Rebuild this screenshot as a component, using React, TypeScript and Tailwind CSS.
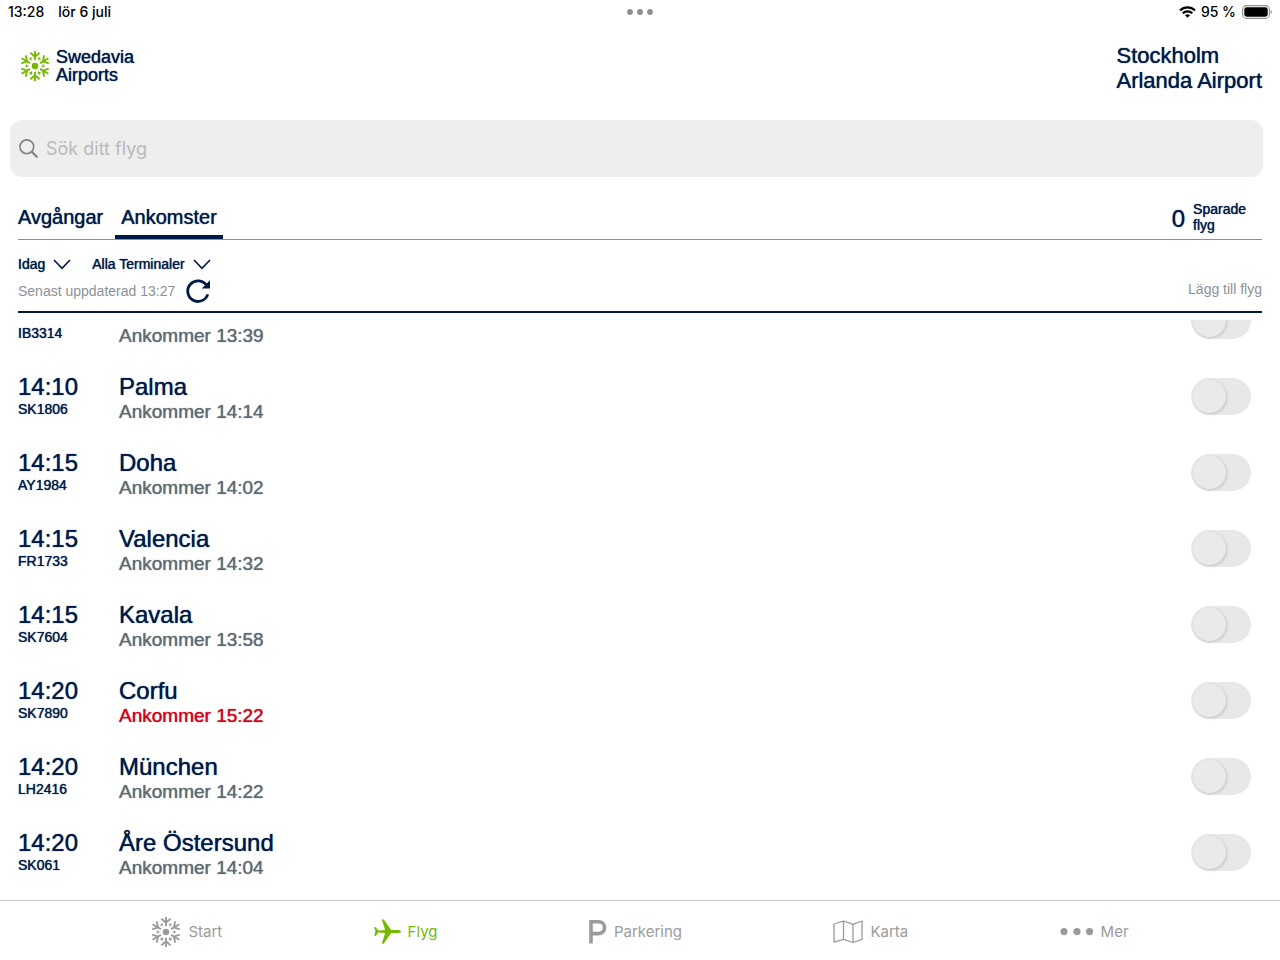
import React, { useState } from "react";

type Flight = {
  code: string;
  eta: string;
  time?: string;
  city?: string;
  delayed?: boolean;
};

const FLIGHTS: Flight[] = [
  { code: "IB3314", eta: "13:39" },
  { time: "14:10", code: "SK1806", city: "Palma", eta: "14:14" },
  { time: "14:15", code: "AY1984", city: "Doha", eta: "14:02" },
  { time: "14:15", code: "FR1733", city: "Valencia", eta: "14:32" },
  { time: "14:15", code: "SK7604", city: "Kavala", eta: "13:58" },
  { time: "14:20", code: "SK7890", city: "Corfu", eta: "15:22", delayed: true },
  { time: "14:20", code: "LH2416", city: "München", eta: "14:22" },
  { time: "14:20", code: "SK061", city: "Åre Östersund", eta: "14:04" },
];

// Liberation Sans has no medium weight, the shadow thickens the regular one
const MEDIUM = "[text-shadow:0_0_1px_currentColor]";

const Snowflake = ({ className }: { className?: string }) => (
  <svg viewBox="-15 -15 30 30" className={className} fill="none" stroke="currentColor" strokeWidth="1.9" aria-hidden="true">
    <circle r="3.3" fill="currentColor" stroke="none" />
    {[0, 60, 120, 180, 240, 300].map((angle) => (
      <g key={angle} transform={`rotate(${angle})`}>
        <path d="M0 -15.5V-5.8M-4.6 -13.2L0 -9.2L4.6 -13.2" />
        <path d="M0 -9.8V-6.4M-1.6 -8.3H1.6" strokeWidth="1.2" transform="rotate(30)" />
      </g>
    ))}
  </svg>
);

const Chevron = () => (
  <svg viewBox="0 0 18 11" className="h-[11px] w-[18px]" fill="none" stroke="currentColor" strokeWidth="1.6" aria-hidden="true">
    <path d="M1 1L9 9.4L17 1" />
  </svg>
);

const StatusBar = () => (
  <div className="grid h-6 shrink-0 grid-cols-3 items-center px-2 font-['Inter','Liberation_Sans',sans-serif] text-[14px] leading-4 font-medium text-black">
    <div className="flex gap-[14px]">
      <span>13:28</span>
      <span>lör 6 juli</span>
    </div>
    <svg viewBox="0 0 26 6" className="h-[6px] w-[26px] justify-self-center" fill="#8e8e8e" aria-hidden="true">
      <circle cx="3" cy="3" r="2.9" />
      <circle cx="13" cy="3" r="2.9" />
      <circle cx="23" cy="3" r="2.9" />
    </svg>
    <div className="flex items-center justify-self-end gap-[5px]">
      <svg viewBox="0 0 17 12" className="h-3 w-[17px]" fill="none" stroke="currentColor" strokeWidth="2.2" aria-hidden="true">
        <path d="M1 4.4C5.2 0.3 11.8 0.3 16 4.4" />
        <path d="M3.7 7.3C6.4 4.7 10.6 4.7 13.3 7.3" />
        <path d="M8.5 11.8L6 9.3C7.4 8 9.6 8 11 9.3Z" fill="currentColor" stroke="none" />
      </svg>
      <span>95 %</span>
      <svg viewBox="0 0 31 14" className="h-[14px] w-[31px]" aria-hidden="true">
        <rect x="1.6" y="0.6" width="26.8" height="12.8" rx="4" fill="none" stroke="#8f8f8f" strokeWidth="1.1" />
        <rect x="3.3" y="2.3" width="23.4" height="9.4" rx="2.4" fill="#000" />
        <path d="M29.6 5V9C31.2 8.4 31.2 5.6 29.6 5Z" fill="#8f8f8f" />
      </svg>
    </div>
  </div>
);

const FlightRow = ({ flight }: { flight: Flight }) => {
  const [saved, setSaved] = useState(false);

  return (
    <li className={`flex h-[76px] shrink-0 pt-[15px] ${MEDIUM}`}>
      <div className="w-[101px] shrink-0">
        <p className="h-[26px] text-[24px] leading-[26px]">{flight.time}</p>
        <p className="text-[14px] leading-[18px]">{flight.code}</p>
      </div>
      <div className="flex-1">
        <p className="h-[26px] text-[24px] leading-[26px]">{flight.city}</p>
        <p className={`text-[19px] leading-6 ${flight.delayed ? "text-[#d0021b]" : "text-[#5f6b72]"}`}>
          Ankommer {flight.eta}
        </p>
      </div>
      <label className="mt-1 mr-[11px] h-[37px] w-[60px] cursor-pointer rounded-full bg-[#e8e8ea] p-0.5 has-checked:bg-[#76b900]">
        <input
          type="checkbox"
          className="peer sr-only"
          aria-label={`Spara ${flight.code}`}
          checked={saved}
          onChange={(e) => setSaved(e.target.checked)}
        />
        <span className="block size-[33px] rounded-full bg-[#eaeaea] shadow-[1px_1px_3px_rgba(0,0,0,0.16)] peer-checked:ml-auto" />
      </label>
    </li>
  );
};

const TabBar = () => {
  const item = "flex items-center gap-[7px] text-[15px] leading-5";

  return (
    <nav className="flex h-[60px] shrink-0 items-center justify-evenly border-t border-[#cfcfcf] pt-0.5 font-['Inter','Liberation_Sans',sans-serif] text-[#9b9b9b]">
      <a href="#start" className={item}>
        <Snowflake className="size-[30px]" />
        Start
      </a>
      <a href="#flyg" aria-current="page" className={`${item} text-[#76b900]`}>
        <svg viewBox="0 0 27 25" className="h-[25px] w-[27px]" fill="currentColor" aria-hidden="true">
          <path d="M27 12.5C27 11.6 25.4 10.9 23 10.9H17.2L10 0.8C9.5 0.1 7.6 0 7.9 0.9L11.2 10.9L4.3 11.4L1.8 8.2H0L1.5 12.5L0 16.8H1.8L4.3 13.6L11.2 14.1L7.9 24.1C7.6 25 9.5 24.9 10 24.2L17.2 14.1H23C25.4 14.1 27 13.4 27 12.5Z" />
        </svg>
        Flyg
      </a>
      <a href="#parkering" className={item}>
        <svg viewBox="0 0 18 24" className="h-6 w-[18px]" fill="none" stroke="currentColor" strokeWidth="3.6" aria-hidden="true">
          <path d="M2 23.4V1.8H9.4C17.6 1.8 17.6 13.6 9.4 13.6H2" />
        </svg>
        Parkering
      </a>
      <a href="#karta" className={item}>
        <svg viewBox="0 0 30 24" className="h-6 w-[30px]" fill="none" stroke="currentColor" strokeWidth="1.3" strokeLinejoin="round" aria-hidden="true">
          <path d="M1 4L10.5 1L20 4.3L29 1V19.3L20 22.5L10.5 19.3L1 22.1ZM10.5 1V19.3M20 4.3V22.5" />
        </svg>
        Karta
      </a>
      <a href="#mer" className={item}>
        <svg viewBox="0 0 34 8" className="h-2 w-[34px]" fill="currentColor" aria-hidden="true">
          <circle cx="4" cy="3.6" r="3.6" />
          <circle cx="17" cy="3.6" r="3.6" />
          <circle cx="29.6" cy="3.6" r="3.6" />
        </svg>
        Mer
      </a>
    </nav>
  );
};

const App = () => {
  const [search, setSearch] = useState("");

  return (
    <div className="flex h-screen flex-col bg-white font-['Liberation_Sans',Arial,sans-serif] text-[#001a47]">
      <StatusBar />

      <header className={`flex h-24 shrink-0 items-start justify-between pt-[19px] pr-[18px] pl-5 ${MEDIUM}`}>
        <div className="flex items-center gap-[6px] pt-[5px]">
          <Snowflake className="size-[30px] text-[#76b900]" />
          <p className="text-[18px] leading-[18px]">
            Swedavia
            <br />
            Airports
          </p>
        </div>
        <h1 className="text-[22px] leading-[25px]">
          Stockholm
          <br />
          Arlanda Airport
        </h1>
      </header>

      <label className="mr-[17px] ml-[10px] flex h-[57px] shrink-0 items-center gap-2 rounded-xl bg-[#eeeeee] px-[9px]">
        <svg viewBox="0 0 19 19" className="size-[19px] text-[#808080]" fill="none" stroke="currentColor" strokeWidth="1.6" aria-hidden="true">
          <circle cx="7.8" cy="7.8" r="6.9" />
          <path d="M12.8 12.8L17.8 17.8" strokeWidth="2.2" strokeLinecap="round" />
        </svg>
        <input
          type="text"
          aria-label="Sök ditt flyg"
          placeholder="Sök ditt flyg"
          className="flex-1 bg-transparent font-['Inter','Liberation_Sans',sans-serif] text-[18px] leading-6 outline-none placeholder:text-[#b9b9b9]"
          value={search}
          onChange={(e) => setSearch(e.target.value)}
        />
      </label>

      <main className="flex min-h-0 flex-1 flex-col px-[18px]">
        <div className="flex h-[63px] shrink-0 items-end justify-between border-b border-[#8b9297]">
          <div className="flex gap-3 text-[20px] leading-6">
            <button type="button" className={`pb-[10px] ${MEDIUM}`}>
              Avgångar
            </button>
            <button type="button" className={`border-b-4 border-[#001a47] px-[6px] pb-[6px] ${MEDIUM}`}>
              Ankomster
            </button>
          </div>
          <button type="button" className={`mr-4 mb-[6px] flex items-center gap-2 text-left ${MEDIUM}`}>
            <span className="pt-1 text-[24px] leading-6">0</span>
            <span className="text-[14px] leading-4">
              Sparade
              <br />
              flyg
            </span>
          </button>
        </div>

        <div className="flex h-[73px] shrink-0 justify-between border-b-2 border-[#001a47] pt-[14px]">
          <div>
            <div className="flex gap-[21px] text-[14px] leading-5">
              <button type="button" className={`flex items-center gap-2 ${MEDIUM}`}>
                Idag <Chevron />
              </button>
              <button type="button" className={`flex items-center gap-2 ${MEDIUM}`}>
                Alla Terminaler <Chevron />
              </button>
            </div>
            <div className="mt-[5px] flex items-center gap-[11px] text-[14px] leading-6 text-[#8b9297]">
              Senast uppdaterad 13:27
              <button type="button" aria-label="Uppdatera" className="text-[#001a47]">
                <svg viewBox="0 0 24 24" className="size-6" fill="none" stroke="currentColor" strokeWidth="2.8" aria-hidden="true">
                  <path d="M20.6 6.4A10.3 10.3 0 1 0 21.8 15.4" />
                  <path d="M24 1.2V9.4H15.8Z" fill="currentColor" stroke="none" />
                </svg>
              </button>
            </div>
          </div>
          <button type="button" className="mt-[25px] self-start text-[14px] leading-5 text-[#8b9297]">
            Lägg till flyg
          </button>
        </div>

        {/* Rows are anchored to the bottom edge */}
        <ul className="mt-[7px] flex min-h-0 flex-1 flex-col justify-end overflow-hidden pb-[9px]">
          {FLIGHTS.map((flight) => (
            <FlightRow key={flight.code} flight={flight} />
          ))}
        </ul>
      </main>

      <TabBar />
    </div>
  );
};

export default App;
